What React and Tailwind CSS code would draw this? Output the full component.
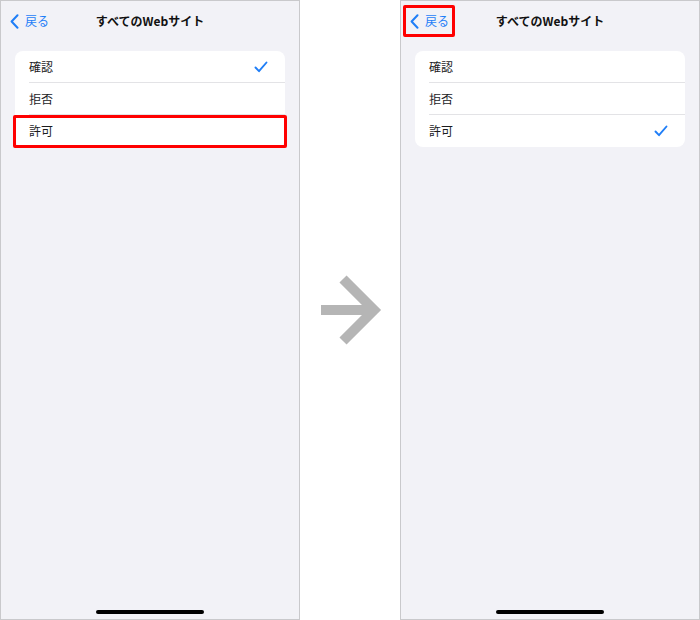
import React from 'react';

const rows = ['確認', '拒否', '許可'];

function Check() {
  return (
    <svg width="14" height="12" viewBox="0 0 14 12" fill="none">
      <path d="M1.5 6.5 L5 10.2 L12.5 1.5" stroke="#1f7ef7" strokeWidth="1.9" strokeLinecap="round" strokeLinejoin="round" />
    </svg>
  );
}

function Phone({ selected, highlightRow, highlightBack }) {
  return (
    <div className="w-[300px] h-[620px] border border-[#c9c9cc] bg-[#f2f2f7] flex flex-col">
      {/* nav bar */}
      <div className="relative h-[40px] flex items-center justify-center">
        <div
          className={`absolute left-[2px] top-[4px] h-[32px] flex items-center gap-[6px] pl-[4px] pr-[3px] border-[3px] rounded-[2px] ${
            highlightBack ? 'border-[#ff0000]' : 'border-transparent'
          }`}
        >
          <svg width="9" height="15" viewBox="0 0 9 15" fill="none">
            <path d="M7.5 1.2 L1.6 7.5 L7.5 13.8" stroke="#1f7ef7" strokeWidth="2" strokeLinecap="round" strokeLinejoin="round" />
          </svg>
          <span className="text-[12px] text-[#1f7ef7]">戻る</span>
        </div>
        <span className="text-[12px] font-semibold text-[#111]">すべてのWebサイト</span>
      </div>

      {/* options */}
      <div className="mx-[14px] mt-[10px] bg-white rounded-[8px]">
        {rows.map((label, i) => (
          <div key={label} className="relative h-[32px] pl-[14px]">
            <div
              className={`h-full flex items-center justify-between pr-[17px] ${
                i < rows.length - 1 ? 'border-b border-[#e3e3e6]' : ''
              }`}
            >
              <span className="text-[12px] text-[#1c1c1e]">{label}</span>
              {selected === i && <Check />}
            </div>
            {highlightRow === i && (
              <div className="absolute -left-[2px] -right-[2px] top-0 -bottom-[1px] border-[3px] border-[#ff0000] rounded-[2px]" />
            )}
          </div>
        ))}
      </div>

      <div className="mt-auto mb-[5px] mx-auto w-[108px] h-[4px] rounded-full bg-black" />
    </div>
  );
}

export default function App() {
  return (
    <div
      className="w-[700px] h-[620px] bg-white flex"
      style={{ fontFamily: '"Noto Sans CJK JP", "Noto Sans", sans-serif' }}
    >
      <Phone selected={0} highlightRow={2} />
      <div className="w-[100px] flex items-center justify-center pl-[4px]">
        <svg width="62" height="70" viewBox="0 0 62 70" fill="none">
          <path d="M0 35 H54" stroke="#b5b5b5" strokeWidth="10" />
          <path d="M22 4 L53 35 L22 66" stroke="#b5b5b5" strokeWidth="10" />
        </svg>
      </div>
      <Phone selected={2} highlightBack />
    </div>
  );
}
